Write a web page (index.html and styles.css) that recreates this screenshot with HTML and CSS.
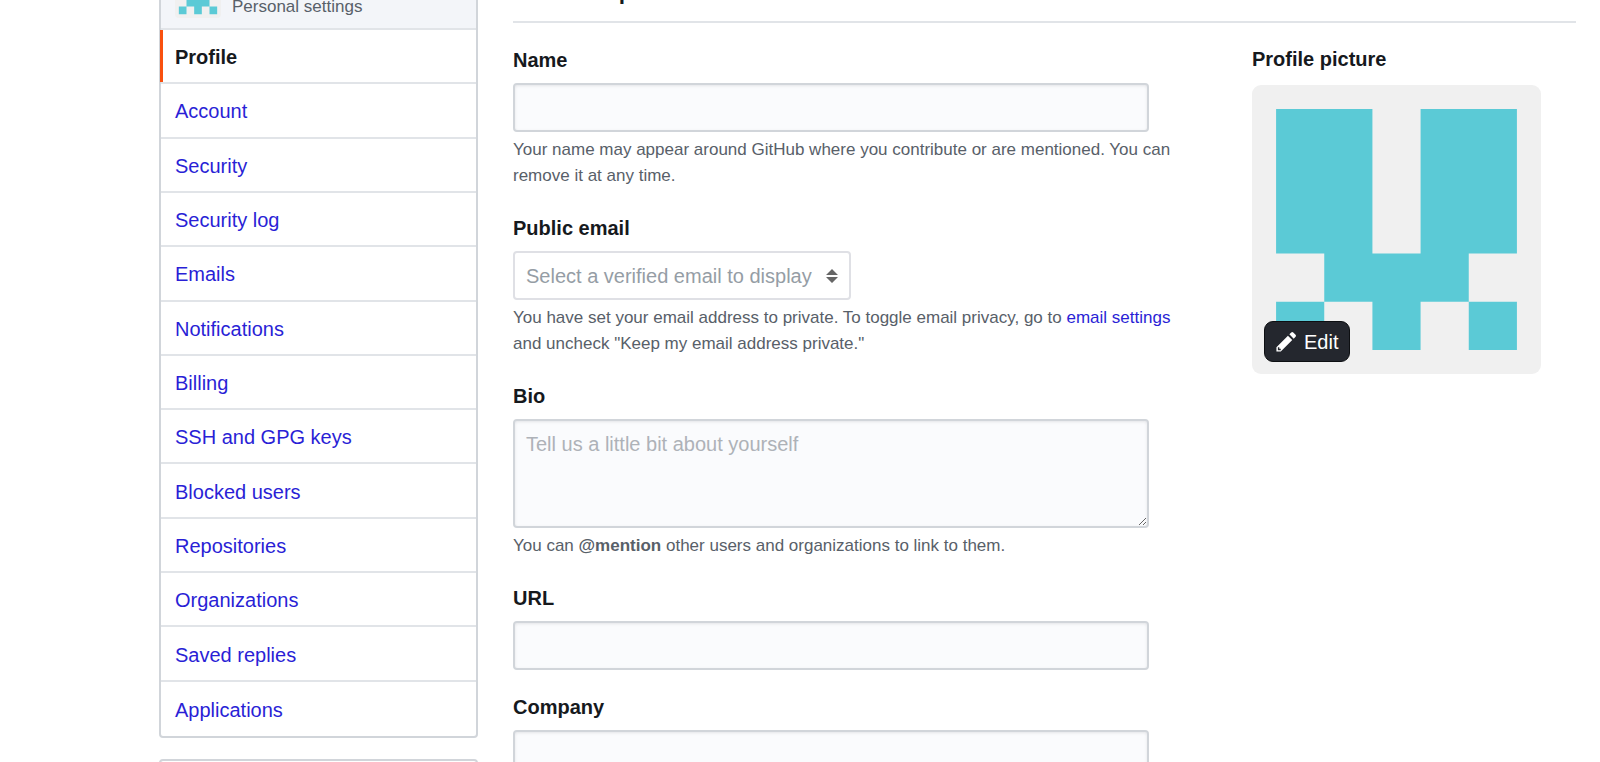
FILE: index.html
```html
<!DOCTYPE html>
<html lang="en">
<head>
  <meta charset="UTF-8" />
  <meta name="viewport" content="width=device-width, initial-scale=1" />
  <title>Public profile</title>
  <link rel="stylesheet" href="styles.css">
</head>
<body>
  <div class="page">
    <aside class="sidebar">
      <nav class="menu">
        <div class="menu-header">
          <svg class="avatar-small" viewBox="0 0 12 12" aria-hidden="true">
            <path fill="#5bcad6" d="M1 1h4v6h2V1h4v6H9v2h2v2H9V9H7v2H5V9H3v2H1V9h2V7H1z"/>
          </svg>
          <span>Personal settings</span>
        </div>
        <ul class="menu-list">
          <li><a href="#" class="selected">Profile</a></li>
          <li><a href="#">Account</a></li>
          <li><a href="#">Security</a></li>
          <li><a href="#">Security log</a></li>
          <li><a href="#">Emails</a></li>
          <li><a href="#">Notifications</a></li>
          <li><a href="#">Billing</a></li>
          <li><a href="#">SSH and GPG keys</a></li>
          <li><a href="#">Blocked users</a></li>
          <li><a href="#">Repositories</a></li>
          <li><a href="#">Organizations</a></li>
          <li><a href="#">Saved replies</a></li>
          <li><a href="#">Applications</a></li>
        </ul>
      </nav>
      <!-- second menu starts below -->
      <div class="menu-next"></div>
    </aside>

    <main class="content">
      <h2>Public profile</h2>
      <div class="columns">
        <form class="profile-form">
          <div class="group">
            <label for="name">Name</label>
            <input type="text" id="name" />
            <p class="note">Your name may appear around GitHub where you contribute or are mentioned. You can remove it at any time.</p>
          </div>

          <div class="group">
            <label for="email">Public email</label>
            <select id="email">
              <option>Select a verified email to display</option>
            </select>
            <p class="note">You have set your email address to private. To toggle email privacy, go to <a href="#">email settings</a> and uncheck "Keep my email address private."</p>
          </div>

          <div class="group">
            <label for="bio">Bio</label>
            <textarea id="bio" placeholder="Tell us a little bit about yourself"></textarea>
            <p class="note">You can <strong>@mention</strong> other users and organizations to link to them.</p>
          </div>

          <div class="group">
            <label for="url">URL</label>
            <input type="text" id="url" />
          </div>

          <div class="group">
            <label for="company">Company</label>
            <input type="text" id="company" />
          </div>
        </form>

        <section class="picture">
          <h3>Profile picture</h3>
          <div class="picture-box">
            <svg class="avatar" viewBox="0 0 12 12" role="img" aria-label="Avatar">
              <path fill="#5bcad6" d="M1 1h4v6h2V1h4v6H9v2h2v2H9V9H7v2H5V9H3v2H1V9h2V7H1z"/>
            </svg>
            <button type="button" class="edit">
              <svg class="pencil" viewBox="0 0 14 16" aria-hidden="true">
                <path fill="#fff" fill-rule="evenodd" d="M0 12v3h3l8-8-3-3-8 8zm3 2H1v-2h1v1h1v1zm10.300-9.300L12 6 9 3l1.300-1.300a.996.996 0 0 1 1.410 0l1.590 1.590c.390.390.390 1.020 0 1.410z"/>
              </svg>
              Edit
            </button>
          </div>
        </section>
      </div>
    </main>
  </div>
</body>
</html>
```
FILE: styles.css
```css
* {
  box-sizing: border-box;
}
body {
  margin: 0;
  background-color: #fff;
  color: #16191d;
  font-family: "Liberation Sans", Arial, sans-serif;
  font-size: 20px;
  line-height: 30px;
}
a {
  color: #2a1fd6;
  text-decoration: none;
}
h2, h3, p, ul {
  margin: 0;
  padding: 0;
}

.page {
  display: flex;
  gap: 35px;
  margin-top: -43px;
  padding: 0 24px 0 159px;
}

/* sidebar */
.sidebar {
  flex: 0 0 319px;
}
.menu {
  border: 2px solid #d1d5da;
  border-radius: 4px;
  margin-bottom: 21px;
}
.menu-header {
  display: flex;
  align-items: flex-end;
  gap: 11px;
  padding: 13px 14px 10px;
  background-color: #f3f5f9;
  border-bottom: 2px solid #e1e4e8;
  color: #586069;
  font-size: 17px;
  line-height: 22px;
}
.avatar-small {
  width: 46px;
  height: 46px;
  background-color: #f0f0f0;
  border-radius: 4px;
}
.menu-list {
  display: grid;
  grid-auto-rows: 1fr;
  min-height: 706px;
  list-style: none;
}
.menu-list li {
  display: flex;
  border-bottom: 2px solid #e1e4e8;
}
.menu-list li:last-child {
  border-bottom: none;
}
.menu-list a {
  flex: 1;
  display: flex;
  align-items: center;
  padding: 2px 14px 0;
}
.menu-list .selected {
  position: relative;
  color: #16191d;
  font-weight: bold;
}
.menu-list .selected::before {
  content: "";
  position: absolute;
  top: 0;
  bottom: 0;
  left: -1px;
  width: 3px;
  background-color: #f9500f;
}
.menu-next {
  height: 60px;
  border: 2px solid #d1d5da;
  border-radius: 4px;
}

/* main column */
.content {
  flex: 1;
  min-width: 0;
}
.content h2 {
  padding-bottom: 9px;
  border-bottom: 2px solid #e1e4e8;
  font-size: 35px;
  font-weight: normal;
  line-height: 55px;
}
.columns {
  display: flex;
  gap: 35px;
  padding-top: 22px;
}
.profile-form {
  flex: 1;
}
.group {
  margin-bottom: 22px;
}
.group label {
  display: block;
  margin-bottom: 8px;
  font-weight: bold;
}
input, select, textarea {
  display: block;
  height: 49px;
  border: 2px solid #d1d5da;
  border-radius: 4px;
  padding: 8px 11px;
  background-color: #fafbfd;
  color: #16191d;
  font: inherit;
}
input, textarea {
  width: 100%;
  max-width: 636px;
  box-shadow: inset 0 1px 3px rgba(27, 31, 35, 0.1);
}
textarea {
  height: 109px;
  resize: vertical;
}
textarea::placeholder {
  color: #aeb2b8;
}
select {
  width: 338px;
  padding-right: 30px;
  border-color: #dfe0e5;
  appearance: none;
  background: #fff url("data:image/svg+xml,%3Csvg xmlns='http://www.w3.org/2000/svg' viewBox='0 0 12 14'%3E%3Cpath fill='%23666' d='M6 0l6 6H0zM6 14l6-6H0z'/%3E%3C/svg%3E") no-repeat right 11px center;
  background-size: 12px 14px;
  color: #959da5;
}
.note {
  max-width: 680px;
  margin-top: 5px;
  padding-bottom: 2px;
  color: #586069;
  font-size: 17px;
  line-height: 26px;
}

/* profile picture */
.picture {
  flex: 0 0 324px;
}
.picture h3 {
  margin-bottom: 12px;
  font-size: 20px;
  line-height: 28px;
}
.picture-box {
  position: relative;
  width: 289px;
}
.avatar {
  display: block;
  width: 100%;
  background-color: #f0f0f0;
  border-radius: 9px;
}
.edit {
  position: absolute;
  left: 12px;
  bottom: 12px;
  display: flex;
  align-items: center;
  gap: 7px;
  height: 41px;
  padding: 0 11px;
  background-color: #24272e;
  color: #fff;
  border: 1px solid #0d0f12;
  border-radius: 9px;
  font: inherit;
  cursor: pointer;
}
.pencil {
  width: 21px;
  height: 23px;
}
```
